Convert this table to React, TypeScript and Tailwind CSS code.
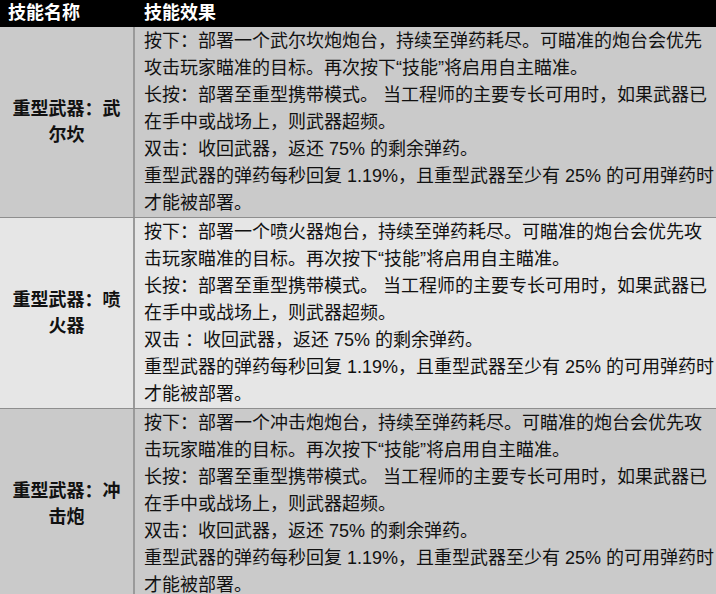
const rows = [
  {
    name: "重型武器：武尔坎",
    bg: "bg-[#cacaca]",
    lines: [
      "按下：部署一个武尔坎炮炮台，持续至弹药耗尽。可瞄准的炮台会优先攻击玩家瞄准的目标。再次按下“技能”将启用自主瞄准。",
      "长按：部署至重型携带模式。 当工程师的主要专长可用时，如果武器已在手中或战场上，则武器超频。",
      "双击：收回武器，返还 75% 的剩余弹药。",
      "重型武器的弹药每秒回复 1.19%，且重型武器至少有 25% 的可用弹药时才能被部署。",
    ],
  },
  {
    name: "重型武器：喷火器",
    bg: "bg-[#e6e6e6]",
    lines: [
      "按下：部署一个喷火器炮台，持续至弹药耗尽。可瞄准的炮台会优先攻击玩家瞄准的目标。再次按下“技能”将启用自主瞄准。",
      "长按：部署至重型携带模式。 当工程师的主要专长可用时，如果武器已在手中或战场上，则武器超频。",
      "双击 ：收回武器，返还 75% 的剩余弹药。",
      "重型武器的弹药每秒回复 1.19%，且重型武器至少有 25% 的可用弹药时才能被部署。",
    ],
  },
  {
    name: "重型武器：冲击炮",
    bg: "bg-[#cacaca]",
    lines: [
      "按下：部署一个冲击炮炮台，持续至弹药耗尽。可瞄准的炮台会优先攻击玩家瞄准的目标。再次按下“技能”将启用自主瞄准。",
      "长按：部署至重型携带模式。 当工程师的主要专长可用时，如果武器已在手中或战场上，则武器超频。",
      "双击：收回武器，返还 75% 的剩余弹药。",
      "重型武器的弹药每秒回复 1.19%，且重型武器至少有 25% 的可用弹药时才能被部署。",
    ],
  },
];

const App = () => {
  return (
    <div className="w-[716px] h-[594px] overflow-hidden bg-[#cacaca] font-['Liberation_Sans','Noto_Sans_CJK_SC',sans-serif] text-[#111]">
      <div className="grid h-[27px] grid-cols-[135px_1fr] items-center bg-black text-[18px] font-bold text-white">
        <div className="pl-2">技能名称</div>
        <div className="pl-[9px]">技能效果</div>
      </div>
      {rows.map((row, i) => (
        <div
          key={row.name}
          className={`grid grid-cols-[135px_1fr] ${row.bg} ${i > 0 ? "border-t border-[#8e8e8e]" : ""}`}
        >
          <div className="flex items-center justify-center border-r-2 border-[#9a9a9a] px-2 text-center text-[18px] font-bold leading-[26px]">
            {row.name}
          </div>
          <div className="pl-[9px] pt-px text-[18px] leading-[27px]">
            {row.lines.map((line) => (
              <p key={line}>{line}</p>
            ))}
          </div>
        </div>
      ))}
    </div>
  );
};

export default App;
